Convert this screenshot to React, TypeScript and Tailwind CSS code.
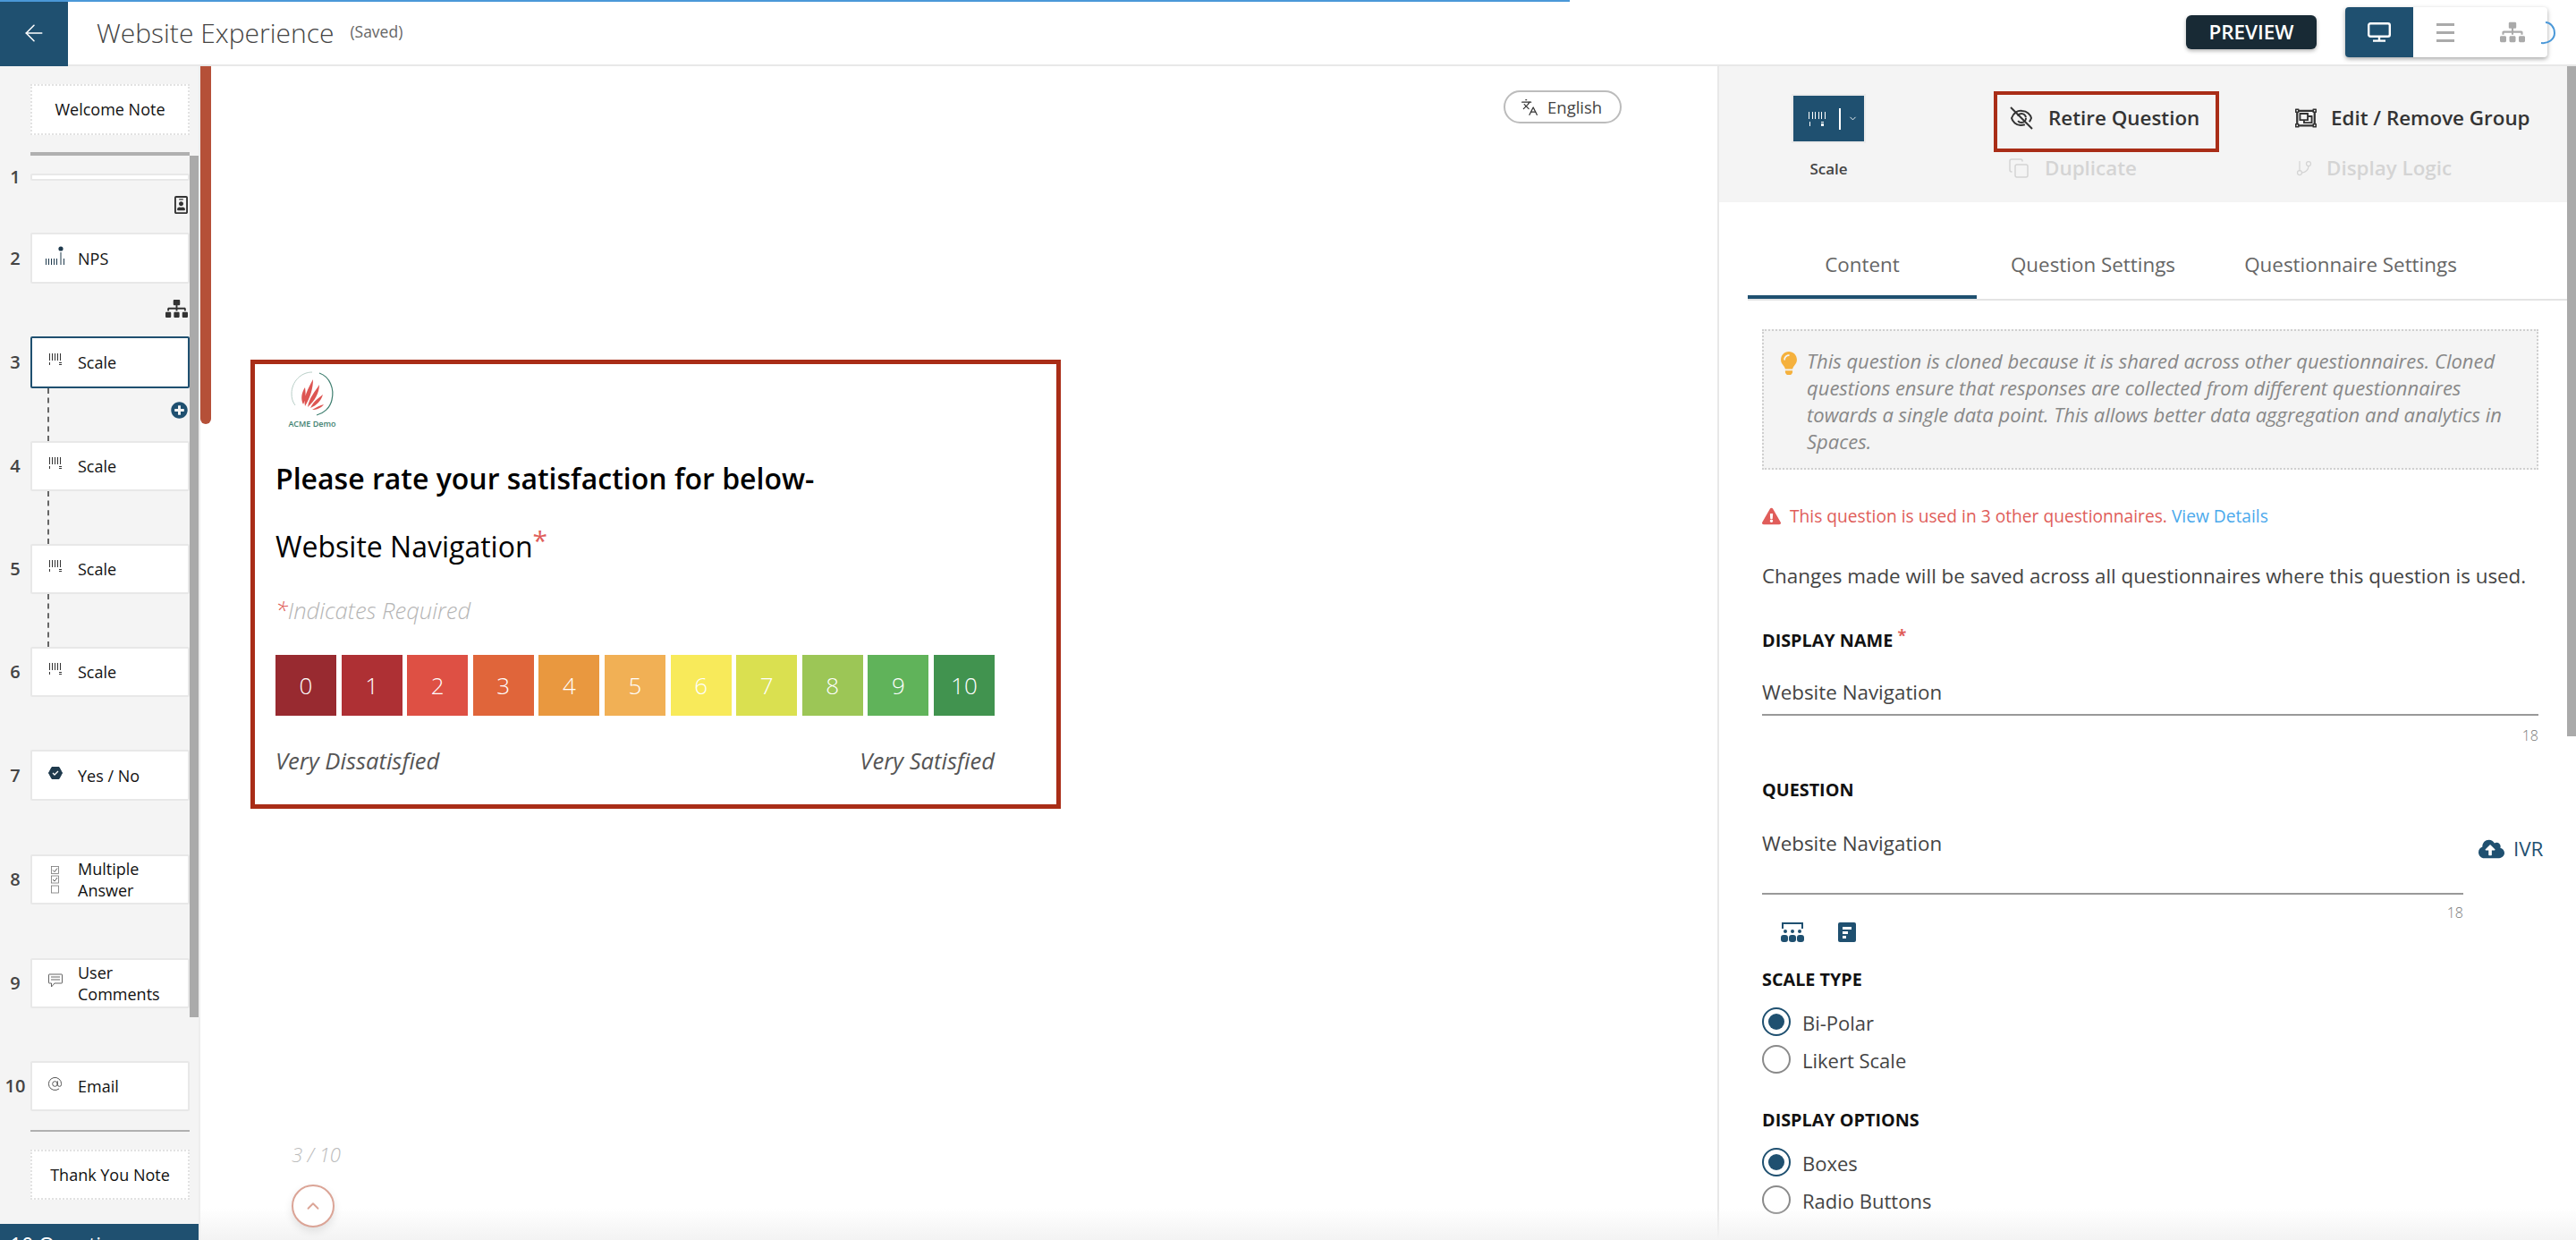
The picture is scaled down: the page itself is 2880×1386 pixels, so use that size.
import { ArrowLeft, AtSign, ChevronDown, ChevronUp, Copy, GitBranch, Languages } from 'lucide-react'
import { FaCloudUploadAlt, FaExclamationTriangle, FaLightbulb, FaPlusCircle, FaRegIdBadge, FaRegObjectGroup, FaSitemap } from 'react-icons/fa'

function ScaleIcon() {
  return (
    <svg viewBox="0 0 16 13" className="w-[16px] h-[13px] -mt-[8px]" fill="#333">
      {[1, 4, 7, 10, 13].map((x) => (
        <rect key={x} x={x} y="0" width="1" height="8" />
      ))}
      <rect x="1" y="10" width="1" height="3" />
      <rect x="12" y="10" width="3" height="1" />
      <rect x="12" y="12" width="3" height="1" />
    </svg>
  )
}

function ScaleButtonIcon() {
  return (
    <svg viewBox="0 0 19 16" className="w-[19px] h-[16px]" fill="#fff">
      {[0, 4, 7, 11, 14, 18].map((x) => (
        <rect key={x} x={x} y="0" width="1" height="8" />
      ))}
      <rect x="1" y="11" width="1" height="5" />
      <rect x="14" y="11" width="3" height="1" />
      <rect x="14" y="13" width="3" height="3" />
    </svg>
  )
}

function NpsIcon() {
  return (
    <svg viewBox="0 0 22 22" className="w-[22px] h-[22px] -mt-[6px]" fill="#1f3a4d">
      <circle cx="17" cy="3" r="2.6" />
      {[0, 3, 6, 9, 12].map((x) => (
        <rect key={x} x={x} y="14" width="1" height="7" />
      ))}
      <rect x="16.5" y="7" width="1" height="14" />
      <rect x="20" y="14" width="1" height="7" />
    </svg>
  )
}

function YesNoIcon() {
  return (
    <svg viewBox="0 0 16 14" className="w-[16px] h-[14px] -mt-[6px]">
      <path d="M4 0.5h8l3.5 6.5-3.5 6.5H4L0.5 7z" fill="#1f3a4d" stroke="#1f3a4d" strokeLinejoin="round" />
      <path d="M5 7l2 2 4-4" fill="none" stroke="#fff" strokeWidth="1.3" />
    </svg>
  )
}

function MultiIcon() {
  return (
    <svg viewBox="0 0 9 31" className="w-[9px] h-[31px]" fill="none" stroke="#777" strokeWidth="0.8">
      <rect x="0.5" y="0.5" width="8" height="8" />
      <rect x="0.5" y="11" width="8" height="8" />
      <rect x="0.5" y="22" width="8" height="8" />
      <path d="M2 4.5l2 2 3-4M2 15l2 2 3-4" stroke="#333" />
    </svg>
  )
}

function CommentIcon() {
  return (
    <svg viewBox="0 0 16 16" className="w-[16px] h-[16px] -mt-[6px]" fill="none" stroke="#555" strokeWidth="0.9">
      <path d="M1 1h14a0.5 0.5 0 0 1 0.5 0.5v9a0.5 0.5 0 0 1-0.5 0.5H7l-3.5 4v-4H1a0.5 0.5 0 0 1-0.5-0.5v-9A0.5 0.5 0 0 1 1 1z" />
      <path d="M3 4h10M3 7h10" />
    </svg>
  )
}

type Item = { n: number; label: string; icon: 'nps' | 'scale' | 'yes' | 'multi' | 'comment' | 'email'; h: string; gap: string; dashed?: boolean; active?: boolean }

const items: Item[] = [
  { n: 2, label: 'NPS', icon: 'nps', h: 'h-[57px]', gap: 'h-[59px]' },
  { n: 3, label: 'Scale', icon: 'scale', h: 'h-[58px]', gap: 'h-[59px]', dashed: true, active: true },
  { n: 4, label: 'Scale', icon: 'scale', h: 'h-[56px]', gap: 'h-[59px]', dashed: true },
  { n: 5, label: 'Scale', icon: 'scale', h: 'h-[56px]', gap: 'h-[59px]', dashed: true },
  { n: 6, label: 'Scale', icon: 'scale', h: 'h-[56px]', gap: 'h-[59px]' },
  { n: 7, label: 'Yes / No', icon: 'yes', h: 'h-[57px]', gap: 'h-[60px]' },
  { n: 8, label: 'Multiple Answer', icon: 'multi', h: 'h-[56px]', gap: 'h-[60px]' },
  { n: 9, label: 'User Comments', icon: 'comment', h: 'h-[56px]', gap: 'h-[59px]' },
  { n: 10, label: 'Email', icon: 'email', h: 'h-[56px]', gap: 'h-0' },
]

function ItemIcon({ icon }: { icon: Item['icon'] }) {
  if (icon === 'nps') return <NpsIcon />
  if (icon === 'yes') return <YesNoIcon />
  if (icon === 'multi') return <MultiIcon />
  if (icon === 'comment') return <CommentIcon />
  if (icon === 'email') return <AtSign className="w-[17px] h-[17px] -mt-[6px] text-[#555]" strokeWidth={1.4} />
  return <ScaleIcon />
}

function Sidebar() {
  return (
    <aside className="relative flex flex-col w-[224px] shrink-0 bg-[#f4f4f4] border-r-2 border-[#eeeeee] pt-[20px]">
      <div className="ml-[34px] w-[178px] h-[57px] flex items-center justify-center bg-white border-2 border-dotted border-[#e2e2e2] text-[18px] text-[#111]">
        Welcome Note
      </div>
      <div className="ml-[34px] w-[178px] h-[4px] mt-[19px] bg-[#b0b0b0]" />

      <div className="flex items-center mt-[20px] h-[8px]">
        <span className="w-[34px] text-center text-[20px] font-semibold text-[#444]">1</span>
        <div className="w-[178px] h-[8px] bg-white border-2 border-[#e8e8e8] rounded-[2px]" />
      </div>
      <div className="relative h-[58px]">
        <FaRegIdBadge className="absolute right-[12px] top-[17px] w-[15px] h-[20px] text-[#333]" />
      </div>

      {items.map((item) => (
        <div key={item.n}>
          <div className={`flex items-center ${item.h}`}>
            <span className="w-[34px] text-center text-[20px] font-semibold text-[#444]">{item.n}</span>
            <div
              className={`flex items-center w-[178px] h-full bg-white rounded-[2px] border-2 text-[18px] leading-[24px] text-[#111] ${
                item.active ? 'border-[#1f5070]' : 'border-[#e8e8e8]'
              }`}
            >
              <div className="w-[51px] shrink-0 flex justify-center">
                <ItemIcon icon={item.icon} />
              </div>
              <span className="w-[110px]">{item.label}</span>
            </div>
          </div>
          <div className={`relative ${item.gap}`}>
            {item.dashed && <div className="absolute left-[53px] top-0 bottom-0 border-l-2 border-dashed border-[#666]" />}
            {item.n === 2 && <FaSitemap className="absolute right-[12px] top-[18px] w-[25px] h-[20px] text-[#333]" />}
            {item.n === 3 && <FaPlusCircle className="absolute right-[12px] top-[15px] w-[19px] h-[19px] text-[#1f5070]" />}
          </div>
        </div>
      ))}

      <div className="ml-[34px] w-[178px] h-[2px] mt-[21px] bg-[#b0b0b0]" />
      <div className="ml-[34px] w-[178px] h-[56px] mt-[20px] flex items-center justify-center bg-white border-2 border-dotted border-[#e2e2e2] text-[18px] text-[#111]">
        Thank You Note
      </div>

      <div className="mt-auto h-[18px] bg-[#1f5070] overflow-hidden flex justify-between pl-[11px] pr-[16px] pt-[8px] text-white text-[23px] leading-[30px]">
        <span>10 Questions</span>
        <span className="text-[20px]">+</span>
      </div>

      {/* scrollbar */}
      <div className="absolute left-[212px] top-[100px] w-[10px] h-[963px] bg-[#aaaaaa]" />
    </aside>
  )
}

const scale = [
  { v: 0, bg: 'bg-[#982a30]' },
  { v: 1, bg: 'bg-[#ae3034]' },
  { v: 2, bg: 'bg-[#de5044]' },
  { v: 3, bg: 'bg-[#e0653a]' },
  { v: 4, bg: 'bg-[#e9983f]' },
  { v: 5, bg: 'bg-[#f1b055]' },
  { v: 6, bg: 'bg-[#f8ea5a]' },
  { v: 7, bg: 'bg-[#dae050]' },
  { v: 8, bg: 'bg-[#9cc656]' },
  { v: 9, bg: 'bg-[#60b35a]' },
  { v: 10, bg: 'bg-[#41934f]' },
]

function AcmeLogo() {
  return (
    <div className="flex flex-col items-center w-[50px] mt-[8px] ml-[16px]">
      <svg viewBox="0 0 50 50" className="w-[50px] h-[50px]" fill="none">
        <path d="M33 2C45 6 50 20 47 32 45 41 38 47 30 49" stroke="#3f7f70" strokeWidth="1.2" />
        <path d="M25 1C12 1 2 12 2 25c0 5 1 9 4 13" stroke="#b9cfc8" strokeWidth="1" />
        <path d="M17 39C15 29 20 20 26 9c0 10-3 20-9 30zM20 40c2-11 8-17 13-25 0 9-5 18-13 25zM23 41c4-8 9-11 14-15-2 7-7 12-14 15zM15 37c-3-6-2-13 2-19 1 7 1 13-2 19zM25 43c5-3 9-5 13-6-3 4-8 6-13 6z" fill="#dd5552" />
      </svg>
      <span className="mt-[3px] text-[9px] leading-[11px] font-semibold whitespace-nowrap text-[#3f7f70]">ACME Demo</span>
    </div>
  )
}

function MainArea() {
  return (
    <main className="relative flex flex-1 flex-col pt-[27px] bg-white">
      <div className="absolute left-0 top-0 w-[12px] h-[400px] rounded-b-full bg-[#b55038]" />

      <div className="self-end mr-[107px] flex items-center gap-[10px] w-[132px] h-[37px] pl-[17px] rounded-full border-2 border-[#bcbcbc] text-[18.5px] text-[#444]">
        <Languages className="w-[20px] h-[20px] text-[#333]" strokeWidth={1.5} />
        English
      </div>

      <section className="ml-[56px] mt-[264px] w-[906px] h-[502px] border-[5px] border-[#a92d17] pl-[23px]">
        <AcmeLogo />
        <h2 className="mt-[35px] text-[32px] leading-[42px] font-semibold text-black">Please rate your satisfaction for below-</h2>
        <p className="mt-[34px] text-[32px] leading-[42px] text-black">
          Website Navigation<sup className="text-[#e05d5a] text-[30px] top-[-8px]">*</sup>
        </p>
        <p className="mt-[35px] text-[25.6px] leading-[32px] italic font-light text-[#b5b5b5]">
          <span className="text-[#e05d5a]">*</span>Indicates Required
        </p>
        <div className="mt-[33px] w-[804px] flex justify-between">
          {scale.map((s) => (
            <div key={s.v} className={`w-[68px] h-[68px] flex items-center justify-center text-[26px] font-light text-white ${s.bg}`}>
              {s.v}
            </div>
          ))}
        </div>
        <div className="mt-[35px] w-[804px] flex justify-between text-[25.6px] leading-[32px] italic text-[#555]">
          <span>Very Dissatisfied</span>
          <span>Very Satisfied</span>
        </div>
      </section>

      <div className="mt-auto ml-[102px] pb-[14px] flex flex-col">
        <span className="text-[22px] leading-[30px] italic font-light text-[#bbbbbb]">3 / 10</span>
        <div className="mt-[19px] w-[48px] h-[48px] rounded-full border-2 border-[#dba496] bg-white shadow-[0_4px_10px_rgba(0,0,0,0.1)] flex items-center justify-center z-10">
          <ChevronUp className="w-[22px] h-[22px] text-[#dba496]" strokeWidth={2} />
        </div>
      </div>
    </main>
  )
}

function EyeSlash() {
  return (
    <svg viewBox="0 0 28 28" className="w-[28px] h-[28px]" fill="none" stroke="#333" strokeWidth="2">
      <path d="M3 14c2-6 7-9 12-8 5 0 9 4 10 8-2 6-7 8-12 8-5 0-9-4-10-8z" strokeDasharray="34 6" />
      <circle cx="14" cy="14" r="5" strokeDasharray="12 6" />
      <path d="M2 2l24 24" />
    </svg>
  )
}

function Radio({ checked, label }: { checked?: boolean; label: string }) {
  return (
    <div className="flex items-center h-[32px] gap-[13px]">
      <div className={`w-[32px] h-[32px] rounded-full border-2 flex items-center justify-center ${checked ? 'border-[#1f5070]' : 'border-[#8a8a8a]'}`}>
        {checked && <div className="w-[18px] h-[18px] rounded-full bg-[#1f5070]" />}
      </div>
      <span className="mt-[2px] text-[22px] text-[#444]">{label}</span>
    </div>
  )
}

function SidePanel() {
  return (
    <div className="relative w-[960px] shrink-0 border-l-2 border-[#e8e8e8] bg-white">
      <div className="flex h-[152px] bg-[#f4f4f4] pt-[28px] pl-[81px]">
        <div className="flex flex-col items-center w-[83px]">
          <div className="flex items-center mt-[3px] pl-[17px] w-[83px] h-[55px] bg-[#1f5070] border-2 border-[#ebebeb]">
            <ScaleButtonIcon />
            <div className="ml-[15px] w-[2px] h-[24px] bg-white" />
            <ChevronDown className="ml-[8px] w-[11px] h-[11px] text-white" />
          </div>
          <span className="mt-[16px] text-[17px] font-semibold text-[#444]">Scale</span>
        </div>
        <div className="ml-[143px] flex flex-col w-[252px]">
          <div className="flex items-center h-[68px] pl-[13px] pb-[8px] gap-[16px] border-4 border-[#a92d17] text-[22.4px] font-semibold text-[#333]">
            <EyeSlash />
            Retire Question
          </div>
          <div className="flex items-center h-[36px] pl-[16px] gap-[17px] text-[22.4px] font-semibold text-[#d4d4d4]">
            <Copy className="w-[24px] h-[24px]" strokeWidth={1.5} />
            Duplicate
          </div>
        </div>
        <div className="ml-[85px] flex flex-col">
          <div className="flex items-center h-[68px] pb-[8px] gap-[16px] text-[22.4px] font-semibold text-[#333]">
            <FaRegObjectGroup className="w-[24px] h-[24px]" />
            Edit / Remove Group
          </div>
          <div className="flex items-center h-[36px] gap-[15px] text-[22.4px] font-semibold text-[#d4d4d4]">
            <GitBranch className="w-[20px] h-[24px]" strokeWidth={1.5} />
            Display Logic
          </div>
        </div>
      </div>

      <div className="ml-[32px] w-[916px] mt-[36px] flex h-[74px] border-b-2 border-[#e4e4e4] text-[22.4px] text-[#666]">
        <div className="w-[256px] h-[72px] flex items-center justify-center border-b-4 border-[#1f5070]">Content</div>
        <div className="w-[260px] h-[72px] flex items-center justify-center border-b-4 border-transparent">Question Settings</div>
        <div className="w-[316px] h-[72px] flex items-center justify-center border-b-4 border-transparent">Questionnaire Settings</div>
      </div>

      <div className="ml-[48px] w-[868px]">
        <div className="relative mt-[32px] h-[157px] bg-[#f4f4f4] border-2 border-dotted border-[#cfcfcf] pt-[18px] pl-[48px] pr-[12px] text-[22px] leading-[30px] italic text-[#888]">
          <FaLightbulb className="absolute left-[18px] top-[23px] w-[20px] h-[26px] text-[#f5b13d]" />
          This question is cloned because it is shared across other questionnaires. Cloned questions ensure that responses are collected from different questionnaires towards a single data point. This allows better data aggregation and analytics in Spaces.
        </div>

        <div className="mt-[40px] flex items-center h-[24px] gap-[10px] text-[19.2px] text-[#e05d5a]">
          <FaExclamationTriangle className="w-[21px] h-[20px]" />
          <span>
            This question is used in 3 other questionnaires. <span className="text-[#4ba9ec]">View Details</span>
          </span>
        </div>

        <p className="mt-[40px] text-[22.4px] leading-[30px] text-[#444] whitespace-nowrap">Changes made will be saved across all questionnaires where this question is used.</p>

        <div className="mt-[45px] text-[19.8px] leading-[24px] font-bold text-[#111]">
          DISPLAY NAME <sup className="text-[#e05d5a] text-[18px] top-[-6px]">*</sup>
        </div>
        <div className="mt-[32px] text-[22.4px] leading-[28px] text-[#444]">Website Navigation</div>
        <div className="mt-[10px] h-[2px] bg-[#999999]" />
        <div className="mt-[11px] text-right text-[16px] leading-[22px] font-light text-[#777]">18</div>

        <div className="mt-[38px] text-[19.8px] leading-[24px] font-bold text-[#111]">QUESTION</div>
        <div className="relative mt-[34px] w-[784px]">
          <div className="text-[22.4px] leading-[28px] text-[#444] h-[42px]">Website Navigation</div>
          <div className="h-[2px] bg-[#999999] mt-[27px]" />
          <div className="mt-[9px] text-right text-[16px] leading-[22px] font-light text-[#777]">18</div>
          <div className="absolute left-[801px] top-[0px] flex items-center gap-[10px] h-[28px] mt-[6px] whitespace-nowrap text-[22.4px] text-[#1f5070]">
            <FaCloudUploadAlt className="w-[29px] h-[24px]" />
            IVR
          </div>
        </div>
        <div className="flex items-center gap-[37px] pl-[20px] -mt-[1px] h-[24px]">
          <svg viewBox="0 0 28 24" className="w-[28px] h-[24px]" fill="#1f5070">
            <path d="M2 1h24v7h-2V3H4v5H2z" />
            <circle cx="6" cy="11" r="2" />
            <circle cx="14" cy="11" r="2" />
            <circle cx="22" cy="11" r="2" />
            <rect x="1" y="15" width="8" height="8" rx="3" />
            <rect x="10" y="15" width="8" height="8" rx="3" />
            <rect x="19" y="15" width="8" height="8" rx="3" />
          </svg>
          <svg viewBox="0 0 20 22" className="w-[20px] h-[22px]">
            <rect width="20" height="22" rx="2" fill="#1f5070" />
            <rect x="5" y="5" width="10" height="3" fill="#fff" />
            <rect x="5" y="10" width="6" height="3" fill="#fff" />
            <rect x="5" y="15" width="4" height="3" fill="#fff" />
          </svg>
        </div>

        <div className="mt-[29px] text-[19.8px] leading-[24px] font-bold text-[#111]">SCALE TYPE</div>
        <div className="mt-[19px] flex flex-col gap-[10px]">
          <Radio checked label="Bi-Polar" />
          <Radio label="Likert Scale" />
        </div>
        <div className="mt-[40px] text-[19.8px] leading-[24px] font-bold text-[#111]">DISPLAY OPTIONS</div>
        <div className="mt-[19px] flex flex-col gap-[10px]">
          <Radio checked label="Boxes" />
          <Radio label="Radio Buttons" />
        </div>
      </div>

      {/* scrollbar */}
      <div className="absolute right-0 top-0 w-[10px] h-[749px] bg-[#aaaaaa]" />
    </div>
  )
}

function Header() {
  return (
    <header className="relative flex items-center h-[74px] shrink-0 bg-white border-b-2 border-[#e8e8e8]">
      <div className="absolute left-0 top-0 w-[1755px] h-[2px] bg-[#4a98d8] z-10" />
      <div className="flex items-center justify-center w-[76px] h-[74px] -mb-[2px] bg-[#1f5070]">
        <ArrowLeft className="w-[30px] h-[30px] text-white" strokeWidth={1.25} />
      </div>
      <h1 className="ml-[32px] text-[30px] font-light text-[#444]">Website Experience</h1>
      <span className="ml-[18px] mb-[2px] text-[17.5px] text-[#666]">(Saved)</span>

      <button className="ml-auto w-[146px] h-[38px] rounded-[6px] bg-[#182a35] text-[22.4px] font-semibold text-white shadow-[0_2px_4px_rgba(0,0,0,0.3)]">PREVIEW</button>

      <div className="relative flex ml-[32px] mr-[32px] w-[226px] h-[56px] rounded-[4px] bg-white shadow-[0_2px_5px_rgba(0,0,0,0.35)]">
        <div className="flex items-center justify-center w-[76px] h-full rounded-l-[4px] bg-[#1f5070]">
          <svg viewBox="0 0 26 22" className="w-[26px] h-[22px]" fill="none" stroke="#fff" strokeWidth="2.4">
            <rect x="1.2" y="1.2" width="23.6" height="14.6" rx="2" />
            <path d="M13 16v4M6 20.6h14" />
          </svg>
        </div>
        <div className="flex items-center justify-center w-[72px]">
          <div className="flex flex-col gap-[6px] w-[20px]">
            <div className="h-[3px] bg-[#aaaaaa]" />
            <div className="h-[3px] bg-[#aaaaaa]" />
            <div className="h-[3px] bg-[#aaaaaa]" />
          </div>
        </div>
        <div className="flex items-center justify-center w-[78px]">
          <FaSitemap className="w-[28px] h-[24px] text-[#aaaaaa]" />
        </div>
        <svg viewBox="0 0 17 26" className="absolute right-[-9px] top-[16px] w-[17px] h-[26px]" fill="none" stroke="#4a98d8" strokeWidth="2">
          <path d="M6 1c5 0 10 5 10 12S9 25 1 24" />
        </svg>
      </div>
    </header>
  )
}

export default function App() {
  return (
    <div className="relative flex flex-col w-[2880px] h-[1386px] overflow-hidden bg-white font-['Open_Sans','Noto_Sans',sans-serif]">
      <Header />
      <div className="flex flex-1 min-h-0">
        <Sidebar />
        <MainArea />
        <SidePanel />
      </div>
      <div className="absolute inset-x-0 bottom-0 h-[36px] ml-[224px] pointer-events-none bg-linear-to-b from-transparent to-[#f3f3f3]" />
    </div>
  )
}
